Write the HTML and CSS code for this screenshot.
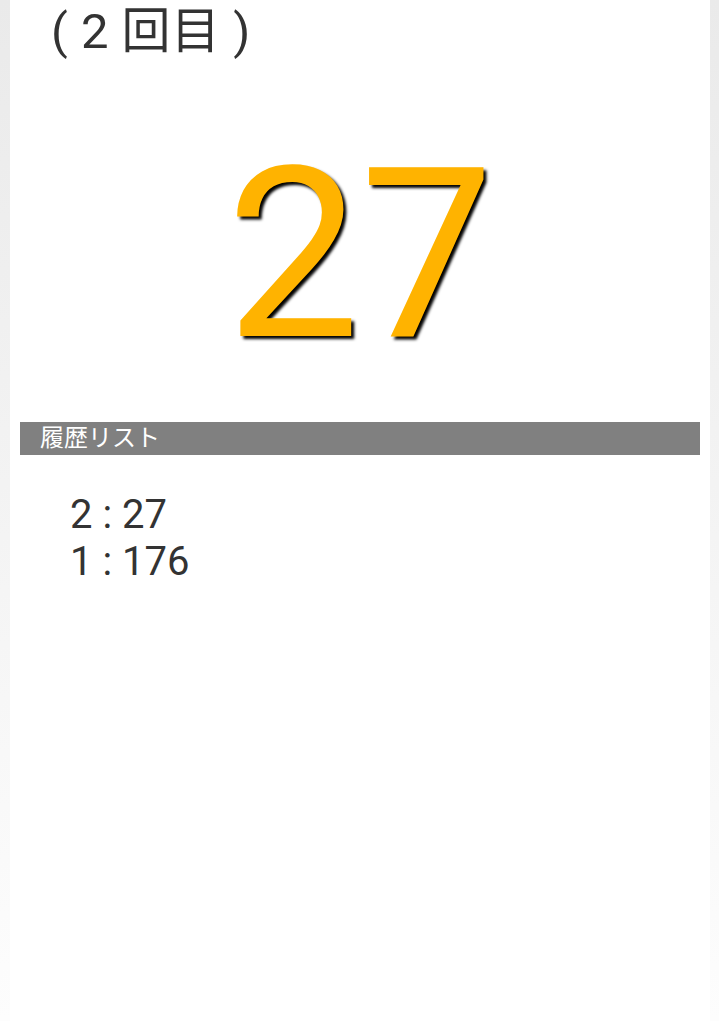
FILE: index.html
```html
<!DOCTYPE html>
<html lang="ja">
<head>
<meta charset="utf-8">
<link rel="stylesheet" href="styles.css">
</head>
<body>
<div class="page">
  <div class="title">( 2 回目 )</div>
  <div class="result">27</div>
  <div class="list-head">履歴リスト</div>
  <ul class="history">
    <li>2 : 27</li>
    <li>1 : 176</li>
  </ul>
</div>
</body>
</html>
```

FILE: styles.css
```css
html, body {
  margin: 0;
  padding: 0;
  height: 100%;
}
body {
  background: linear-gradient(#eaeaea, #fdfdfd);
  font-family: Roboto, "Noto Sans CJK JP", sans-serif;
  color: #333;
}
.page {
  margin: 0 9px 0 10px;
  background: #fff;
  min-height: 100%;
}
.title {
  font-size: 49px;
  line-height: 64px;
  padding-left: 41px;
  letter-spacing: 0.5px;
  white-space: pre;
}
.result {
  font-family: Roboto, sans-serif;
  font-size: 238px;
  line-height: 300px;
  text-align: center;
  color: #ffb300;
  text-shadow: 3px 3px 3px #000;
  margin-top: 41px;
  height: 317px;
}
.list-head {
  margin: 0 10px;
  background: #808080;
  color: #fff;
  font-size: 24px;
  line-height: 33px;
  padding-left: 20px;
}
.history {
  list-style: none;
  margin: 0;
  padding: 36px 0 0 60px;
  font-size: 40px;
  line-height: 47px;
}
```
